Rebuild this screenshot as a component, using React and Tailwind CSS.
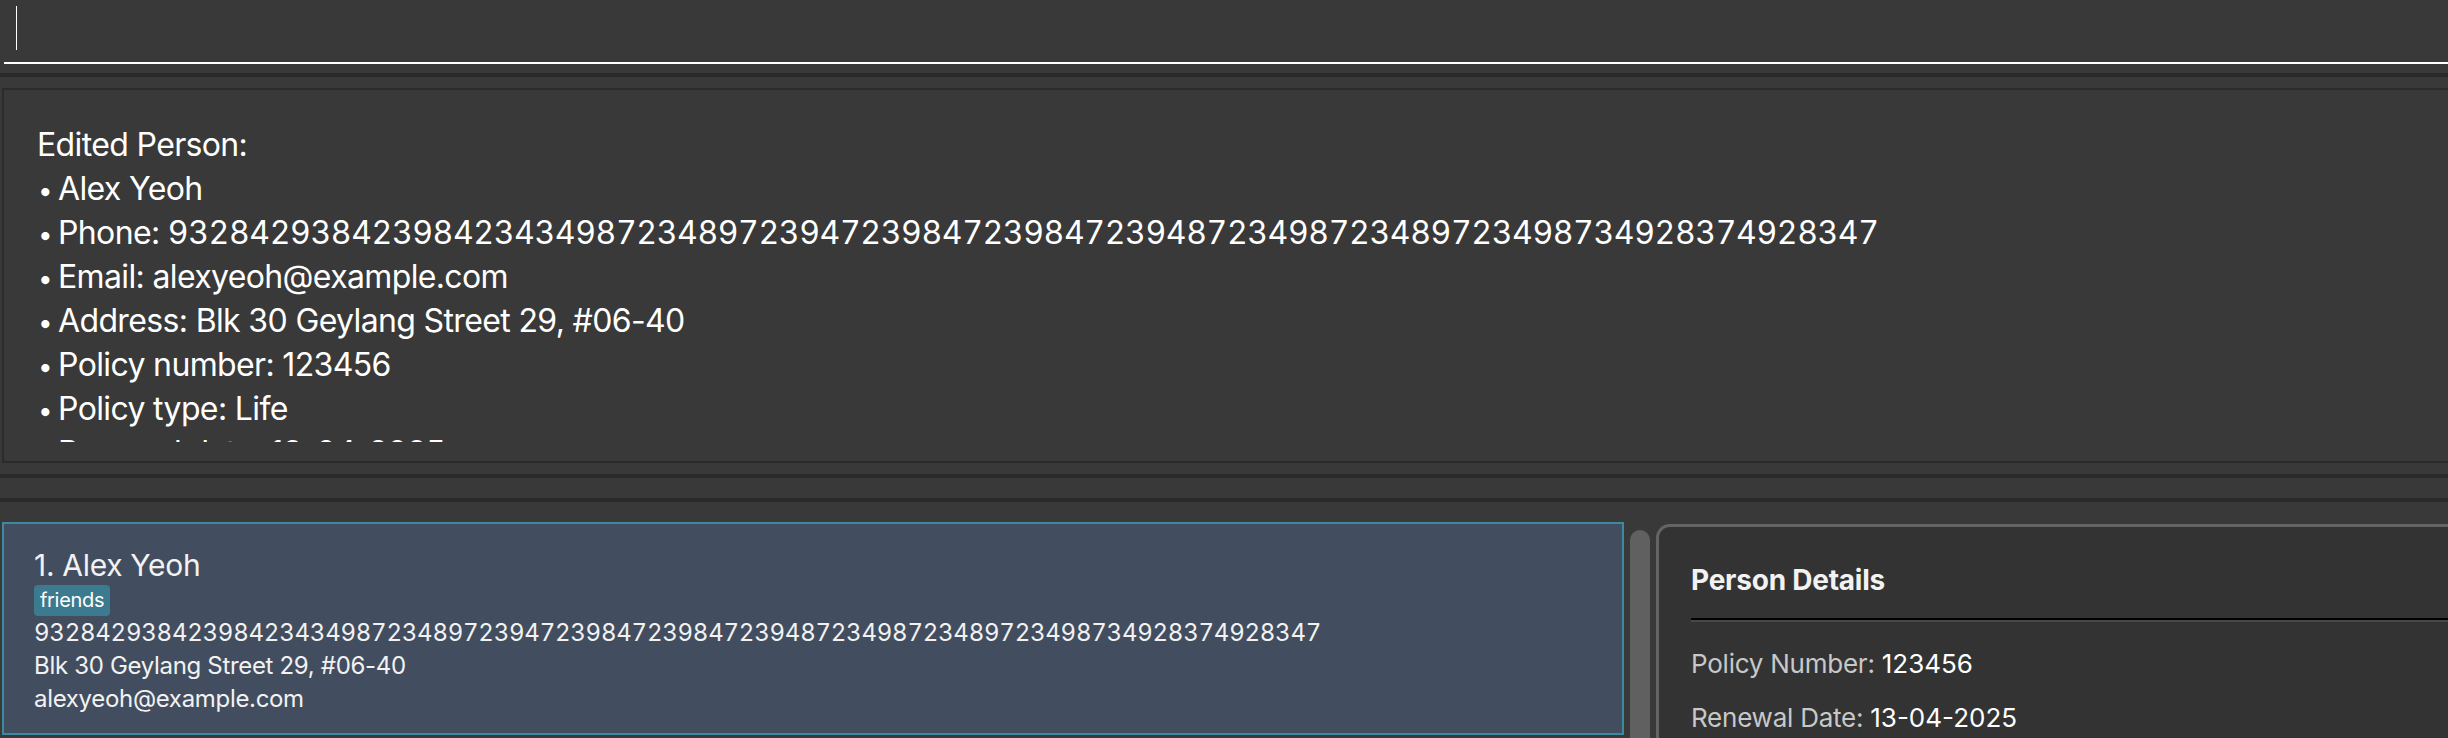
export default function App() {
  const phone =
    "932842938423984234349872348972394723984723984723948723498723489723498734928374928347";

  const resultLines = [
    ["Alex Yeoh"],
    ["Phone: ", phone],
    ["Email: alexyeoh@example.com"],
    ["Address: Blk 30 Geylang Street 29, #06-40"],
    ["Policy number: 123456"],
    ["Policy type: Life"],
    ["Renewal date: 13-04-2025"],
  ];

  return (
    <div className="h-[738px] w-full overflow-hidden bg-[#393939] font-['Inter',sans-serif] text-white">
      {/* command box */}
      <div className="pl-1">
        <div className="h-[64px] border-b-2 border-white pl-3 pt-[6px]">
          <div className="h-[44px] w-px bg-white" />
        </div>
      </div>

      <div className="mt-[9px] h-[4px] bg-[#2a2a2a]" />

      {/* result display */}
      <div className="ml-[2px] mt-[11px] h-[375px] border-y-2 border-l-2 border-[#2b2b2b]">
        <div className="h-[352px] overflow-hidden pl-[33px] pt-[33px] text-[32px] leading-[44px] tracking-[-0.02em] whitespace-pre">
          <div>Edited Person:</div>
          {resultLines.map(([label, digits]) => (
            <div key={label} className="h-[44px]">
              <span className="inline-block w-[21px] pl-[1px] text-[26px] leading-none">•</span>
              <span>{label}</span>
              {digits && <span className="tabular-nums tracking-[-0.012em]">{digits}</span>}
            </div>
          ))}
        </div>
      </div>

      <div className="mt-[11px] h-[4px] bg-[#2a2a2a]" />
      <div className="mt-[20px] h-[4px] bg-[#2a2a2a]" />

      {/* list + details */}
      <div className="mt-[20px] flex h-[300px]">
        <div className="ml-[2px] w-[1622px] shrink-0 self-start border-2 border-[#3b8aa0] bg-[#424e5f] pb-[18px] pl-[30px] pt-[23px] tracking-[-0.32px] text-[#f2f2f2]">
          <div className="text-[30px] leading-[36px]">1. Alex Yeoh</div>
          <div className="mt-[2px] flex">
            <span className="rounded-[4px] bg-[#3c7a8f] px-[6px] py-[4px] text-[20px] leading-[23px] text-white">
              friends
            </span>
          </div>
          <div className="text-[24px] leading-[33px] whitespace-nowrap tabular-nums tracking-[-0.24px]">
            {phone}
          </div>
          <div className="text-[24px] leading-[33px]">Blk 30 Geylang Street 29, #06-40</div>
          <div className="text-[24px] leading-[33px]">alexyeoh@example.com</div>
        </div>

        <div className="ml-[6px] mt-[8px] w-[20px] shrink-0 rounded-[10px] bg-[#606060]" />

        <div className="ml-[6px] mt-[2px] flex-1 rounded-tl-[14px] border-l-[3px] border-t-[3px] border-[#646464] bg-[#333333] pl-[32px] pt-[36px] tracking-[-0.24px]">
          <div className="text-[28px] font-bold leading-[34px] text-[#f2f2f2]">Person Details</div>
          <div className="mt-[21px] h-[2px] bg-black" />
          <div className="h-[2px] bg-[#484848]" />
          <div className="mt-[26px] text-[26px] leading-[32px]">
            <span className="text-[#c8c8c8]">Policy Number: </span>
            <span className="text-white tracking-normal">123456</span>
          </div>
          <div className="mt-[22px] text-[26px] leading-[32px]">
            <span className="text-[#c8c8c8]">Renewal Date: </span>
            <span className="text-white tracking-normal">13-04-2025</span>
          </div>
        </div>
      </div>
    </div>
  );
}
